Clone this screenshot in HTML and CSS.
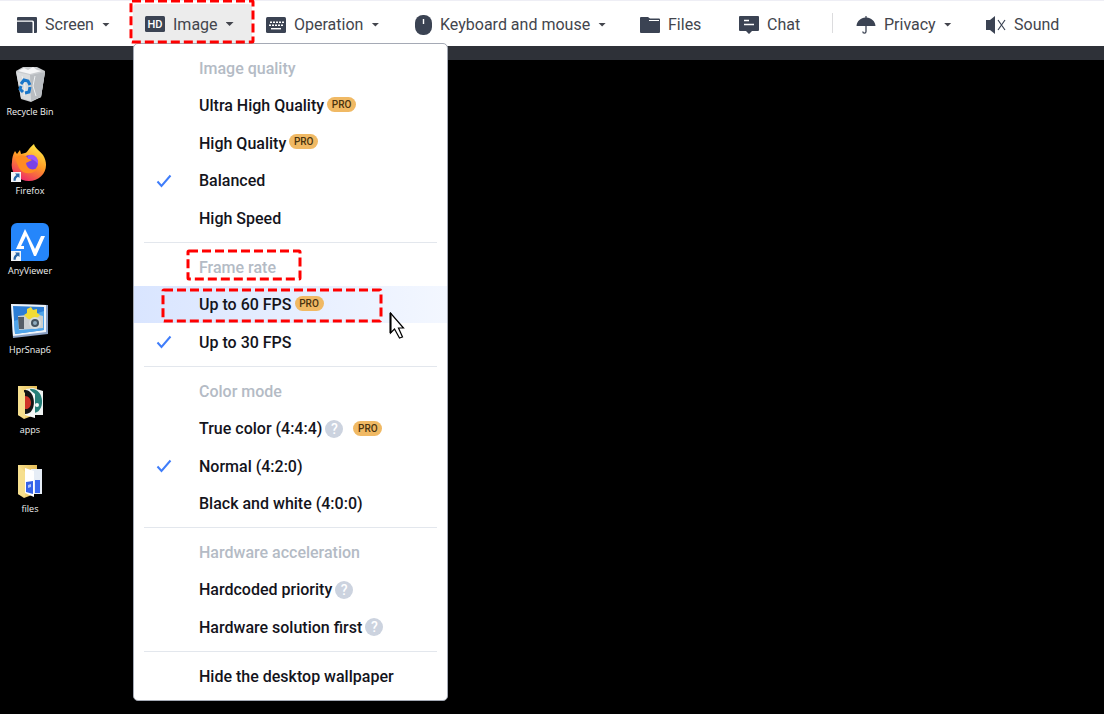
FILE: index.html
```html
<!DOCTYPE html>
<html lang="en">
<head>
<meta charset="utf-8">
<meta name="viewport" content="width=device-width, initial-scale=1">
<title>Remote desktop</title>
<link rel="stylesheet" href="styles.css">
</head>
<body>
<svg class="defs" aria-hidden="true">
  <symbol id="check" viewBox="0 0 16 14"><path d="M1.5 7.5 5.5 12 14.5 1.500" fill="none" stroke="#3f7dfa" stroke-width="2"/></symbol>
  <symbol id="shortcut" viewBox="0 0 10 10"><path d="M0 0h10v10H0z" fill="#f2f5f8"/><path d="M4 1.500h4.500V6L7 4.700C5.500 5.500 4.700 6.800 4.700 8.800H2.500C2.300 6.200 3.500 4.200 5.400 3.100z" fill="#2866a8"/></symbol>
  <linearGradient id="folder" x1="0" x2="1"><stop offset="0" stop-color="#f8df8c"/><stop offset="1" stop-color="#e5bd58"/></linearGradient>
</svg>
<header class="toolbar">
  <button class="tool tool-screen" type="button">
    <svg class="icon" viewBox="0 0 20 16"><path d="M1 0h18a1 1 0 0 1 1 1v14a1 1 0 0 1-1 1h-2V5a1.500 1.500 0 0 0-1.500-1.500H0V1a1 1 0 0 1 1-1z"/><path d="M0 4.800h14.500a1 1 0 0 1 1 1V16H1a1 1 0 0 1-1-1z"/></svg>
    <span>Screen</span><i class="caret"></i>
  </button>
  <div class="tool-wrap">
    <button class="tool tool-image" type="button" aria-haspopup="true" aria-expanded="true">
      <svg class="icon" viewBox="0 0 20 16"><rect width="20" height="16" rx="1.500"/><text class="hd" x="10" y="12" text-anchor="middle">HD</text></svg>
      <span>Image</span><i class="caret"></i>
    </button>
    <svg class="mark mark-image"><rect class="dash"/></svg>
    <div class="menu" role="menu">
      <section class="group">
        <h2 class="row title">Image quality</h2>
        <button class="row" type="button">Ultra High Quality<span class="pro">PRO</span></button>
        <button class="row" type="button">High Quality<span class="pro">PRO</span></button>
        <button class="row" type="button"><svg class="check"><use href="#check"/></svg>Balanced</button>
        <button class="row" type="button">High Speed</button>
      </section>
      <section class="group">
        <h2 class="row title">Frame rate<svg class="mark mark-title"><rect class="dash"/></svg></h2>
        <button class="row active" type="button">Up to 60 FPS<span class="pro">PRO</span><svg class="mark mark-row"><rect class="dash"/></svg></button>
        <button class="row" type="button"><svg class="check"><use href="#check"/></svg>Up to 30 FPS</button>
      </section>
      <section class="group">
        <h2 class="row title">Color mode</h2>
        <button class="row" type="button">True color (4:4:4)<span class="help">?</span><span class="pro pro-far">PRO</span></button>
        <button class="row" type="button"><svg class="check"><use href="#check"/></svg>Normal (4:2:0)</button>
        <button class="row" type="button">Black and white (4:0:0)</button>
      </section>
      <section class="group">
        <h2 class="row title">Hardware acceleration</h2>
        <button class="row" type="button">Hardcoded priority<span class="help">?</span></button>
        <button class="row" type="button">Hardware solution first<span class="help">?</span></button>
      </section>
      <section class="group">
        <button class="row" type="button">Hide the desktop wallpaper</button>
      </section>
    </div>
  </div>
  <button class="tool tool-operation" type="button">
    <svg class="icon" viewBox="0 0 20 16"><rect width="20" height="16" rx="1.500"/><path d="M4 5.200h14M3 8.200h14" fill="none" stroke="#fff" stroke-width="1.600" stroke-dasharray="2 1"/><path d="M5 11.700h10" stroke="#fff" stroke-width="1.400"/></svg>
    <span>Operation</span><i class="caret"></i>
  </button>
  <button class="tool tool-mouse" type="button">
    <svg class="icon icon-mouse" viewBox="0 0 17 20"><rect width="17" height="20" rx="8"/><path d="M8.500 4v5" stroke="#fff" stroke-width="1.400"/></svg>
    <span>Keyboard and mouse</span><i class="caret"></i>
  </button>
  <button class="tool tool-files" type="button">
    <svg class="icon" viewBox="0 0 20 16"><path d="M1 0h7l2 1.500h9a1 1 0 0 1 1 1V15a1 1 0 0 1-1 1H1a1 1 0 0 1-1-1V1a1 1 0 0 1 1-1z"/><path d="M9 3.500h10" stroke="#fff" stroke-width="1"/></svg>
    <span>Files</span>
  </button>
  <button class="tool tool-chat" type="button">
    <svg class="icon icon-chat" viewBox="0 0 20 18"><path d="M1 0h18a1 1 0 0 1 1 1v13a1 1 0 0 1-1 1h-6l-3 3-3-3H1a1 1 0 0 1-1-1V1a1 1 0 0 1 1-1z"/><path d="M5 4.500h5M5 8.500h10" stroke="#fff" stroke-width="1.400"/></svg>
    <span>Chat</span>
  </button>
  <span class="divider"></span>
  <button class="tool tool-privacy" type="button">
    <svg class="icon icon-umbrella" viewBox="0 0 20 18"><path d="M.5 10C1 4.500 5 2 9.400 1.500V0h1.200v1.500C15 2 19 4.500 19.500 10z"/><path d="M10 9v6.500a1.600 1.600 0 0 1-3.200 0" fill="none" stroke="#3b4353" stroke-width="1.300"/></svg>
    <span>Privacy</span><i class="caret"></i>
  </button>
  <button class="tool tool-sound" type="button">
    <svg class="icon icon-chat" viewBox="0 0 20 18"><path d="M0 4h4L9 0v18l-5-4H0z"/><path d="M12 4l7 10M19 4l-7 10" stroke="#3b4353" stroke-width="1.200"/></svg>
    <span>Sound</span>
  </button>
</header>
<main class="desktop">
  <ul class="shortcuts">
    <li class="shortcut">
      <svg class="pic" viewBox="0 0 40 40"><path d="M6 7 13 3l14 0 8 4-4 26-10 5-10-3z" fill="#c9cccf"/><path d="M6 8l14 3 15-3-4 25-10 4-10-3z" fill="#d9dcde"/><path d="M20 11l15-3-4 25-10 4z" fill="#b9bdc1"/><path d="M8 7l6-3 4 2 5-3 4 3 5 1-12 3z" fill="#f5f6f7"/><path d="m12 12 3 10-1 10M25 12l-2 10 3 10" stroke="#edf0f1" fill="none"/><path d="M11 20l3-4 4 1 2 4M20 23l-1 5-4 1M13 28l-3-3 1-3" fill="none" stroke="#1976c9" stroke-width="3"/></svg>
      <span>Recycle Bin</span></li>
    <li class="shortcut">
      <svg class="pic" viewBox="0 0 40 40"><defs><linearGradient id="fox" x1=".8" y1="0" x2=".3" y2="1"><stop offset="0" stop-color="#fff04a"/><stop offset=".5" stop-color="#ff9825"/><stop offset="1" stop-color="#ed246c"/></linearGradient></defs><path d="M5 8 7 11l3-4 1 4 4-1c2 0 4-5 9-9 1 4 5 6 9 11 8 13-1 26-14 26C8 38 0 30 2 19c0-4 1-8 3-11z" fill="url(#fox)"/><circle cx="20" cy="20" r="8" fill="#7940e5"/><path d="M5 15c5-4 10-3 13 0l4 2-6 3c1 6 6 8 12 5-4 7-15 7-19 0z" fill="#ff8b22"/><path d="M18 13c5-4 11 2 10 8-3-4-6-5-10-5z" fill="#9b57fa"/><use href="#shortcut" x="1" y="29" width="10" height="10"/></svg>
      <span>Firefox</span></li>
    <li class="shortcut">
      <svg class="pic" viewBox="0 0 40 40"><rect x="1" y="0" width="38" height="38" rx="6" fill="#2586fb"/><path d="M15 6 6 26h8v-3h-3l5-10 8 20h2l9-20h-4l-6 13z" fill="#fff"/><use href="#shortcut" x="1" y="28" width="10" height="10"/></svg>
      <span>AnyViewer</span></li>
    <li class="shortcut">
      <svg class="pic" viewBox="0 0 40 40"><path d="M1 2 38 3v29L3 36z" fill="#8aa0c5"/><path d="M1 2 36 3v27L3 34z" fill="#eef4fa"/><path d="M3 4 34 5v23L5 32z" fill="#2c7dd5"/><path d="M4 19 34 9v19L5 32z" fill="#50a5ea"/><path d="M8 14l8-1h13l4 1v12L9 28z" fill="#cbcfd0"/><path d="M8 15h6v12H9z" fill="#555e66"/><path d="m21 5 2 3 4-1v4l3 2-3 3-4 2-5-1-4-4 3-2v-4z" fill="#f2dc35"/><circle cx="25" cy="21" r="6" fill="#d8dddd"/><circle cx="25" cy="21" r="4" fill="#44525d"/><circle cx="25" cy="21" r="2" fill="#8eabbd"/></svg>
      <span>HprSnap6</span></li>
    <li class="shortcut">
      <svg class="pic" viewBox="0 0 40 40"><path d="M8 4h19v28L14 37 8 33z" fill="url(#folder)"/><path d="M16 7l7-1 10 3v24H18z" fill="#eef3f2"/><path d="M20 7c15-2 16 24 3 24z" fill="#257e78"/><path d="M14 9l6-1 5 4v24l-10-3z" fill="#f6f8f8"/><path d="M14 8c12-2 14 24 1 24z" fill="#121314"/><path d="M15 14c8 0 8 14 0 13z" fill="#ce3328"/><circle cx="27" cy="23" r="2" fill="#f6f8f8"/><path d="M8 4l7 7v25l-7-3z" fill="#f6df8e"/></svg>
      <span>apps</span></li>
    <li class="shortcut">
      <svg class="pic" viewBox="0 0 40 40"><path d="M8 4h19v28L14 37 8 33z" fill="url(#folder)"/><path d="M21 8h11v25H21z" fill="#e6edf6"/><path d="M25 19h5v13h-5z" fill="#3868ee"/><path d="M15 7l9 3v26l-9-4z" fill="#fff"/><path d="M16 21l7-1v13l-7-2z" fill="#3462e8"/><path d="m18 24 3-1v3l-3 1z" fill="#acc3fa"/><path d="M8 4l7 7v25l-7-3z" fill="#f6df8e"/></svg>
      <span>files</span></li>
  </ul>
</main>
<svg class="cursor" viewBox="0 0 16 28"><path d="M1.500 1v20l4-4 5 9 3-1-4-9h5z" fill="#fff" stroke="#000" stroke-width="1.200"/><path d="M1.500 1v20" stroke="#000" stroke-width="2"/></svg>
</body>
</html>
```
FILE: styles.css
```css
* { box-sizing: border-box; }
body {
  margin: 0;
  min-height: 100vh;
  display: flex;
  flex-direction: column;
  background: #000;
  font-family: Roboto, "Liberation Sans", sans-serif;
  font-size: 16px;
}
.defs { position: absolute; width: 0; height: 0; }
button { border: 0; background: none; font: inherit; color: inherit; text-align: left; }

.toolbar {
  display: flex;
  align-items: stretch;
  height: 46px;
  padding-left: 5px;
  background: #fff;
  border-top: 1px solid #eeeef5;
  color: #43454d;
}
.tool {
  display: flex;
  align-items: center;
  gap: 8px;
  padding: 3px 20px 1px 12px;
  height: 100%;
  white-space: nowrap;
}
.tool-wrap { position: relative; display: flex; }
.tool-image {
  height: 40px;
  margin: 3px 2px 0 0;
  padding: 0 18px 0 12px;
  background: #ececec;
  border-radius: 4px;
}
.tool-screen { min-width: 128px; }
.tool-image { min-width: 119px; }
.tool-operation { min-width: 149px; }
.tool-mouse { min-width: 225px; }
.tool-files { min-width: 99px; }
.tool-chat { min-width: 105px; }
.tool-privacy { min-width: 130px; }
.icon { flex: none; width: 20px; height: 16px; fill: #3b4353; }
.icon-mouse { width: 17px; height: 20px; }
.icon-chat, .icon-umbrella { height: 18px; }
.hd { fill: #fff; font: 500 11px Roboto, sans-serif; }
.caret {
  width: 8px;
  height: 4px;
  background: #43454d;
  clip-path: polygon(0 0, 100% 0, 50% 100%);
}
.divider { width: 1px; height: 20px; margin: 12px 11px 0 0; background: #dcdcde; }

.menu {
  position: absolute;
  z-index: 1;
  top: 42px;
  left: 0;
  width: 315px;
  padding: 5px 0;
  background: #fff;
  border: 1px solid #a5aab5;
  border-radius: 5px;
  color: #14141c;
}
.group + .group::before {
  content: "";
  display: block;
  height: 1px;
  margin: 5px 10px;
  background: #e3e7ed;
}
.row {
  position: relative;
  display: flex;
  align-items: center;
  width: 100%;
  height: 38px;
  margin: 0;
  padding: 0 0 0 65px;
  font-size: 16px;
  font-weight: 500;
  white-space: nowrap;
}
.row:nth-child(even) { height: 37px; }
.title { color: #b4bbc5; }
.active { background: linear-gradient(90deg, #d9e5ff, #f3f7ff); }
.check { position: absolute; left: 22px; width: 16px; height: 14px; }
.pro {
  margin: 0 0 3px 3px;
  width: 29px;
  border-radius: 8px;
  background: #f0b964;
  color: #49330f;
  font-size: 10px;
  line-height: 15px;
  text-align: center;
}
.pro-far { margin: 0 0 0 10px; }
.help {
  width: 18px;
  margin-left: 3px;
  border-radius: 50%;
  background: #ccd3df;
  color: #fff;
  font-size: 14px;
  line-height: 18px;
  text-align: center;
}

.mark { position: absolute; z-index: 2; overflow: visible; pointer-events: none; }
.dash { width: 100%; height: 100%; rx: 1px; fill: none; stroke: #ff0000; stroke-width: 3px; stroke-dasharray: 9px 4px; }
.mark-image { left: -2px; top: 0; width: 122px; height: 41px; }
.mark-title { left: 54px; top: 3px; width: 112px; height: 28px; }
.mark-row { left: 29px; top: 4px; width: 218px; height: 31px; }

.desktop { flex: 1; border-top: 14px solid #2e3138; }
.shortcuts {
  display: flex;
  flex-direction: column;
  gap: 23px;
  width: 60px;
  margin: 0;
  padding: 4px 0 0;
  list-style: none;
}
.shortcut {
  display: flex;
  flex-direction: column;
  align-items: center;
  color: #f2f2f2;
  font: 9px/16px "Open Sans", sans-serif;
}
.shortcut:nth-child(even) { padding-bottom: 1px; }
.pic { width: 40px; height: 40px; }
.cursor { position: absolute; z-index: 3; left: 389px; top: 312px; width: 16px; height: 28px; }
```
